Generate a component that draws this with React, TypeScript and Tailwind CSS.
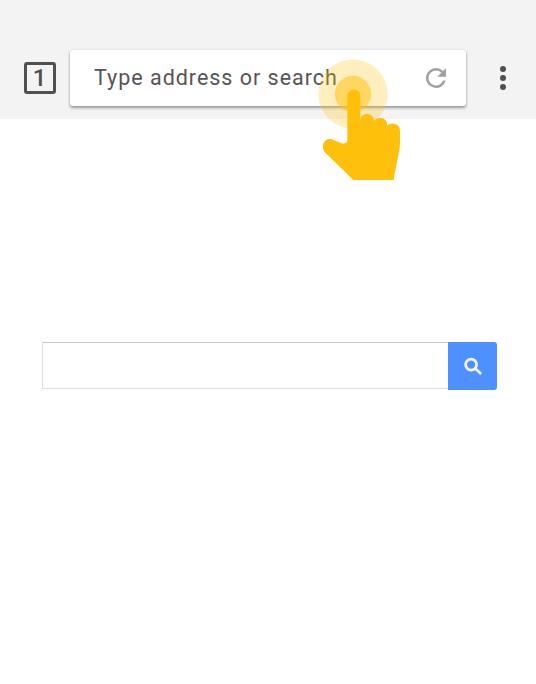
function TapHand() {
  return (
    <svg
      className="pointer-events-none absolute left-[305px] top-[50px] h-[130px] w-[110px]"
      viewBox="0 0 330 390"
      aria-hidden="true"
    >
      <circle cx="144" cy="132" r="104" fill="#ffc20e" fillOpacity="0.27" />
      <circle cx="144" cy="132" r="54.5" fill="#ffc20e" fillOpacity="0.54" />
      <path
        fill="#ffc00b"
        d="M127 139C127 112 166 112 166 139V209C169 196 178 192 187 192C199 192 207 201 207 213C211 207 220 203 229 204C240 205 247 214 247 227C252 222 258 220 266 221C278 222 285 230 285 243V279C285 302 270 359 266 390H145L59 306C53 299 52 285 58 276C62 269 70 265 80 268L106 278C117 283 127 281 127 268Z"
      />
    </svg>
  );
}

function TabCounter() {
  return (
    <button
      className="flex size-8 shrink-0 items-center justify-center rounded-[3px] border-[3px] border-[#505050] pb-px pr-px text-[24px] font-medium leading-none text-[#505050]"
      aria-label="Tabs"
    >
      1
    </button>
  );
}

export default function App() {
  return (
    <div className="relative h-[684px] w-[536px] overflow-hidden bg-white font-[Roboto,sans-serif]">
      <header className="flex h-[119px] items-start bg-[#f3f3f3] pl-[24px] pt-[50px]">
        <div className="mr-[14px] flex h-14 items-center">
          <TabCounter />
        </div>
        <div className="flex h-14 w-[396px] items-center justify-between rounded-[3px] bg-white pl-6 pr-[15px] shadow-[0_2px_3px_rgba(0,0,0,0.36),0_0_2px_rgba(0,0,0,0.15)]">
          <span className="whitespace-nowrap text-[21.5px] leading-7 tracking-[0.98px] text-[#555]">
            Type address or search
          </span>
          <svg className="size-[30px] shrink-0" viewBox="0 0 24 24" fill="#a0a0a0" aria-label="Reload">
            <path d="M17.65 6.35A7.96 7.96 0 0 0 12 4a8 8 0 1 0 7.73 10h-2.08A6 6 0 1 1 12 6c1.66 0 3.14.69 4.22 1.78L13 11h7V4z" />
          </svg>
        </div>
        <button className="ml-[34px] flex h-14 w-[6px] flex-col items-center justify-center gap-[3px]" aria-label="Menu">
          <span className="size-[6px] shrink-0 rounded-full bg-[#505050]" />
          <span className="size-[6px] shrink-0 rounded-full bg-[#505050]" />
          <span className="size-[6px] shrink-0 rounded-full bg-[#505050]" />
        </button>
      </header>

      <main className="pl-[42px] pt-[223px]">
        <div className="flex h-12 w-[456px]">
          <div className="h-[47px] w-[406px] border border-r-0 border-[#dcdcdc] border-t-[#c8c8c8]" />
          <button
            className="flex h-12 w-[49px] items-center justify-center rounded-r-[3px] bg-[#4d90fe]"
            aria-label="Search"
          >
            <svg className="size-[20px]" viewBox="0 0 20 20" fill="none" stroke="#f5f5f5">
              <circle cx="8.1" cy="8.6" r="5.5" strokeWidth="2.7" />
              <path d="M12.2 12.5L18.2 18" strokeWidth="2.7" />
            </svg>
          </button>
        </div>
      </main>

      <TapHand />
    </div>
  );
}
